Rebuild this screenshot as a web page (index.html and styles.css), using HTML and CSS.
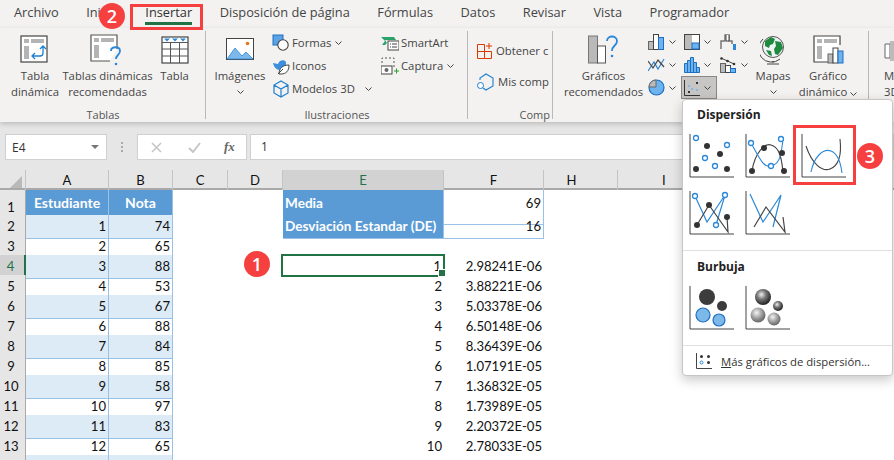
FILE: index.html
```html
<!DOCTYPE html>
<html lang="es">
<head>
<meta charset="utf-8">
<title>Insertar gráfico de dispersión</title>
<link rel="stylesheet" href="styles.css">
</head>
<body>
<div class="app">
  <nav class="tabs">
    <span class="tab">Archivo</span>
    <span class="tab">Inicio</span>
    <span class="tab tab-on">Insertar</span>
    <span class="tab">Disposición de página</span>
    <span class="tab">Fórmulas</span>
    <span class="tab">Datos</span>
    <span class="tab">Revisar</span>
    <span class="tab">Vista</span>
    <span class="tab">Programador</span>
  </nav>

  <section class="ribbon">
    <div class="group g-tablas">
      <div class="group-body">
        <div class="bigbtn b-54">
          <svg class="bigicon" width="30" height="30" viewBox="0 0 30 30"><rect x="1" y="1" width="26" height="26" fill="#fff" stroke="#444" stroke-width="1.2"/><rect x="4" y="4" width="5" height="4" fill="#b4b4b4"/><rect x="11" y="4" width="13" height="4" fill="#b4b4b4"/><rect x="4" y="11" width="5" height="13" fill="#b4b4b4"/><path d="M13 21h7a3 3 0 0 0 3-3v-6M20 14l3-3 3 3M15 18l-3 3 3 3" fill="none" stroke="#1e7fcf" stroke-width="1.3"/></svg>
          <span>Tabla<br>dinámica</span>
        </div>
        <div class="bigbtn b-91">
          <svg class="bigicon" width="36" height="32" viewBox="0 0 36 32"><path d="M27 15V1H1v26h19" fill="#fff" stroke="#555" stroke-width="1.2"/><rect x="4" y="4" width="5" height="4" fill="#b4b4b4"/><rect x="11" y="4" width="13" height="4" fill="#b4b4b4"/><rect x="4" y="11" width="5" height="13" fill="#b4b4b4"/><path d="M21 17c0-5 9-5 9 0 0 4-4 4-4 8" fill="none" stroke="#2b88d8" stroke-width="1.8"/><circle cx="26" cy="30" r="1.3" fill="#2b88d8"/></svg>
          <span>Tablas dinámicas<br>recomendadas</span>
        </div>
        <div class="bigbtn b-43">
          <svg class="bigicon" width="28" height="28" viewBox="0 0 28 28"><rect x="1" y="1" width="26" height="26" fill="#fff" stroke="#444" stroke-width="1.2"/><path d="M3 2.5h6l-3 3zM11 2.5h6l-3 3zM19 2.5h6l-3 3z" fill="#2b88d8"/><path d="M1 6.500h26M1 13h26M1 20h26M9.500 6.500V27M18.500 6.500V27" stroke="#555" stroke-width="1" fill="none"/></svg>
          <span>Tabla</span>
        </div>
      </div>
      <div class="group-label">Tablas</div>
    </div>

    <div class="group g-ilus">
      <div class="group-body">
        <div class="bigbtn b-imagenes">
          <svg class="bigicon icon-img" width="28" height="24" viewBox="0 0 28 24"><rect x=".5" y=".5" width="27" height="21" fill="#fff" stroke="#444"/><path d="M1 21l8-11 7 8 4-4 7 7z" fill="#7db8ea" stroke="#2b88d8" stroke-width=".8"/><circle cx="21.500" cy="5.500" r="1.800" fill="#e8731a"/></svg>
          <span>Imágenes</span>
          <svg class="chev chev-block" width="7" height="4" viewBox="0 0 7 4"><path d="M.5.500l3 3 3-3" fill="none" stroke="#444"/></svg>
        </div>
        <div class="smallcol col-shapes">
          <div class="smallbtn">
            <svg width="18" height="18" viewBox="0 0 18 18"><rect x="1" y="1" width="10" height="10" fill="#5ba3e6" stroke="#1e6fc0"/><circle cx="11" cy="11" r="5.200" fill="#fff" stroke="#444" stroke-width="1.100"/></svg>
            <span>Formas</span>
            <svg class="chev" width="7" height="4" viewBox="0 0 7 4"><path d="M.5.500l3 3 3-3" fill="none" stroke="#444"/></svg>
          </div>
          <div class="smallbtn">
            <svg width="18" height="18" viewBox="0 0 18 18"><path d="M1 6l5 1c1-4 6-5 8-2v4c0 3-3 4-6 4-4 0-6-3-7-7z" fill="#3d8fdc"/><path d="M7 17c0-6 4-9 10-9 0 6-3 9-8 9zM6 17l5-5" fill="#fff" stroke="#444"/></svg>
            <span>Iconos</span>
          </div>
          <div class="smallbtn">
            <svg width="18" height="18" viewBox="0 0 18 18"><path d="M9 1l7 4v8l-7 4-7-4V5zM2 5l7 4 7-4M9 9v8" fill="none" stroke="#1e7fcf" stroke-width="1.200"/></svg>
            <span>Modelos 3D</span>
            <svg class="chev chev-far" width="7" height="4" viewBox="0 0 7 4"><path d="M.5.500l3 3 3-3" fill="none" stroke="#444"/></svg>
          </div>
        </div>
        <div class="smallcol col-art">
          <div class="smallbtn">
            <svg width="18" height="18" viewBox="0 0 18 18"><path d="M0 3h13l2 3H4l2 3 -2 2H1l3-4z" fill="#2aa36b"/><rect x="7" y="7" width="11" height="9" fill="#fff" stroke="#444"/><path d="M9 10h1M11 10h5M9 13h1M11 13h5" stroke="#444"/></svg>
            <span>SmartArt</span>
          </div>
          <div class="smallbtn">
            <svg width="18" height="18" viewBox="0 0 18 18"><path d="M1 6V1h12v9" fill="none" stroke="#555" stroke-dasharray="2 2"/><rect x="0" y="9" width="11" height="8" fill="#fff" stroke="#444"/><circle cx="5.500" cy="13" r="2" fill="#666"/><path d="M13 14h5M15.500 11.500v5" stroke="#2a9d2a"/></svg>
            <span>Captura</span>
            <svg class="chev" width="7" height="4" viewBox="0 0 7 4"><path d="M.5.500l3 3 3-3" fill="none" stroke="#444"/></svg>
          </div>
        </div>
      </div>
      <div class="group-label">Ilustraciones</div>
    </div>

    <div class="group g-comp">
      <div class="group-body comp-body">
        <div class="smallbtn wide">
          <svg width="16" height="16" viewBox="0 0 16 16"><path d="M.5 1.500h7v14H.5zM.5 8.500h14v7h-7M12 0v6M9 3h6" fill="none" stroke="#d83b01"/></svg>
          <span>Obtener c</span>
        </div>
        <div class="smallbtn wide">
          <svg width="18" height="18" viewBox="0 0 18 18"><path d="M3 7V5l6-4 7 4v8l-7 4-3-2" fill="none" stroke="#1e7fcf" stroke-width="1.100"/><circle cx="3.500" cy="12.500" r="3" fill="#fff" stroke="#1e7fcf"/></svg>
          <span>Mis comp</span>
        </div>
      </div>
      <div class="group-label clip-label">Comp</div>
    </div>

    <div class="group g-charts">
      <div class="group-body">
        <div class="bigbtn b-reco">
          <svg class="bigicon" width="32" height="30" viewBox="0 0 32 30"><rect x=".5" y="1" width="9" height="27" fill="#b9b9b9" stroke="#777"/><rect x="9.500" y="11" width="8" height="17" fill="#fff" stroke="#555"/><path d="M19 6c0-6 10-6 10 0 0 5-5 4-5 10" fill="none" stroke="#2b88d8" stroke-width="1.800"/><circle cx="24" cy="21" r="1.300" fill="#2b88d8"/></svg>
          <span>Gráficos<br>recomendados</span>
        </div>
        <div class="chartgrid">
          <div class="cbtn">
            <svg width="17" height="16" viewBox="0 0 17 16"><rect x=".5" y="7.500" width="5" height="8" fill="#bbb" stroke="#666"/><rect x="5.500" y=".5" width="5" height="15" fill="#fff" stroke="#444"/><rect x="10.500" y="3.500" width="5" height="12" fill="#6db3ee" stroke="#1e6fc0"/></svg>
            <svg class="chev" width="7" height="4" viewBox="0 0 7 4"><path d="M.5.500l3 3 3-3" fill="none" stroke="#444"/></svg>
          </div>
          <div class="cbtn">
            <svg width="16" height="16" viewBox="0 0 16 16"><rect x=".5" y=".5" width="15" height="15" fill="#fff" stroke="#444"/><rect x="1" y="1" width="7" height="14" fill="#bbb"/><rect x="8" y="9" width="7" height="6" fill="#6db3ee" stroke="#1e6fc0"/></svg>
            <svg class="chev" width="7" height="4" viewBox="0 0 7 4"><path d="M.5.500l3 3 3-3" fill="none" stroke="#444"/></svg>
          </div>
          <div class="cbtn">
            <svg width="17" height="16" viewBox="0 0 17 16"><path d="M1 15V7h4V1h4v6h3v3" fill="none" stroke="#777" stroke-width="1.500"/><path d="M6 1v6h3V1" fill="#fff" stroke="#444"/><rect x="13" y="10" width="3" height="6" fill="#2b88d8"/></svg>
            <svg class="chev" width="7" height="4" viewBox="0 0 7 4"><path d="M.5.500l3 3 3-3" fill="none" stroke="#444"/></svg>
          </div>
          <div class="cbtn">
            <svg width="17" height="16" viewBox="0 0 17 16"><path d="M0 14L6 5l4 7 6-10" fill="none" stroke="#2b88d8" stroke-width="1.200"/><path d="M0 4l5 7 5-8 6 7" fill="none" stroke="#444" stroke-width="1.200"/></svg>
            <svg class="chev" width="7" height="4" viewBox="0 0 7 4"><path d="M.5.500l3 3 3-3" fill="none" stroke="#444"/></svg>
          </div>
          <div class="cbtn">
            <svg width="16" height="16" viewBox="0 0 16 16"><path d="M.5 15.500v-9h3v-3h3V.5h3v5h3v5h3v5z" fill="#6db3ee" stroke="#1e6fc0"/><path d="M3.500 6.500v9M6.500 3.500v12M9.500 5.500v10M12.500 10.500v5" stroke="#1e6fc0"/></svg>
            <svg class="chev" width="7" height="4" viewBox="0 0 7 4"><path d="M.5.500l3 3 3-3" fill="none" stroke="#444"/></svg>
          </div>
          <div class="cbtn">
            <svg width="17" height="16" viewBox="0 0 17 16"><rect x=".5" y="6.500" width="5" height="9" fill="#bbb" stroke="#666"/><rect x="5.500" y="8.500" width="5" height="7" fill="#fff" stroke="#444"/><rect x="10.500" y="11.500" width="5" height="4" fill="#6db3ee" stroke="#1e6fc0"/><path d="M1 1l13 6" stroke="#444"/><circle cx="1.500" cy="1.500" r="1.300" fill="#333"/><circle cx="7.500" cy="4" r="1.300" fill="#333"/><circle cx="14" cy="7" r="1.300" fill="#333"/></svg>
            <svg class="chev" width="7" height="4" viewBox="0 0 7 4"><path d="M.5.500l3 3 3-3" fill="none" stroke="#444"/></svg>
          </div>
          <div class="cbtn">
            <svg width="17" height="17" viewBox="0 0 17 17"><circle cx="8.500" cy="8.500" r="7.500" fill="#6db3ee" stroke="#1e6fc0" stroke-width="1.200"/><path d="M8 1v7H1a7 7 0 0 1 7-7z" fill="#bbb" stroke="#666"/></svg>
            <svg class="chev" width="7" height="4" viewBox="0 0 7 4"><path d="M.5.500l3 3 3-3" fill="none" stroke="#444"/></svg>
          </div>
          <div class="cbtn cbtn-on">
            <svg width="16" height="16" viewBox="0 0 16 16"><path d="M.5 0v15.500H16" fill="none" stroke="#333"/><rect x="12" y="2" width="2" height="2" fill="#333"/><rect x="4" y="11" width="2" height="2" fill="#333"/><rect x="4" y="5" width="2" height="2" fill="#7db8ea"/><rect x="7" y="8" width="2" height="2" fill="#7db8ea"/><rect x="12" y="9" width="2" height="2" fill="#7db8ea"/></svg>
            <svg class="chev" width="7" height="4" viewBox="0 0 7 4"><path d="M.5.500l3 3 3-3" fill="none" stroke="#444"/></svg>
          </div>
        </div>
        <div class="bigbtn b-mapas">
          <svg class="bigicon" width="26" height="30" viewBox="0 0 26 30"><circle cx="13" cy="12" r="10.500" fill="#eef3f6" stroke="#555"/><path d="M5 6l6-4 4 2-2 5-3 1-1 3-4-2zM15 6l6 1 2 6-5 7-3-1-1-5 2-3zM6 15l5 1 1 5-3-1z" fill="#1f8a3d"/><path d="M13 26v2M7 29h12M3 4a13 13 0 0 0 17 20" fill="none" stroke="#444"/></svg>
          <span>Mapas</span>
          <svg class="chev chev-block" width="7" height="4" viewBox="0 0 7 4"><path d="M.5.500l3 3 3-3" fill="none" stroke="#444"/></svg>
        </div>
        <div class="bigbtn b-din">
          <svg class="bigicon" width="31" height="30" viewBox="0 0 31 30"><path d="M27 10V1H1v26h14" fill="#fff" stroke="#444" stroke-width="1.200"/><rect x="4" y="4" width="5" height="4" fill="#b4b4b4"/><rect x="11" y="4" width="13" height="4" fill="#b4b4b4"/><rect x="4" y="11" width="5" height="13" fill="#b4b4b4"/><rect x="15" y="19" width="5" height="9" fill="#bbb" stroke="#666"/><rect x="20" y="13" width="5" height="15" fill="#fff" stroke="#444"/><rect x="25" y="16" width="5" height="12" fill="#6db3ee" stroke="#1e6fc0"/></svg>
          <span>Gráfico<br>dinámico <svg class="chev" width="7" height="4" viewBox="0 0 7 4"><path d="M.5.500l3 3 3-3" fill="none" stroke="#444"/></svg></span>
        </div>
      </div>
    </div>

    <div class="group g-3d">
      <div class="group-body">
        <div class="bigbtn b-3d">
          <svg class="bigicon" width="22" height="30" viewBox="0 0 22 30"><path d="M1 9h5v14H1z" fill="#fff" stroke="#666"/><path d="M6 6h16v20H6z" fill="#bbb"/></svg>
          <span>M<br>3D</span>
        </div>
      </div>
    </div>
  </section>

  <section class="formulabar">
    <div class="namebox"><span>E4</span><i class="namecaret"></i></div>
    <div class="dots"></div>
    <div class="fxbox">
      <svg width="11" height="11" viewBox="0 0 11 11"><path d="M1 1l9 9M10 1l-9 9" stroke="#c4c4c4" stroke-width="1.500"/></svg>
      <svg width="13" height="11" viewBox="0 0 13 11"><path d="M1 6l4 4 7-9" fill="none" stroke="#c4c4c4" stroke-width="1.800"/></svg>
      <span class="fx">fx</span>
    </div>
    <div class="formula">1</div>
  </section>

  <section class="sheet">
    <div class="row headrow">
      <div class="corner"><i></i></div><div class="ch">A</div><div class="ch">B</div><div class="ch">C</div><div class="ch">D</div><div class="ch ch-on">E</div><div class="ch">F</div><div class="ch ch-h">H</div><div class="ch ch-last">I</div>
    </div>
    <div class="row row-first">
      <div class="rh">1</div><div class="c th">Estudiante</div><div class="c th">Nota</div><div></div><div></div><div class="c lab">Media</div><div class="c n bx">69</div>
    </div>
    <div class="row">
      <div class="rh">2</div><div class="c n st">1</div><div class="c n st">74</div><div></div><div></div><div class="c lab">Desviación Estandar (DE)</div><div class="c n bx">16</div>
    </div>
    <div class="row"><div class="rh">3</div><div class="c n tb">2</div><div class="c n tb">65</div></div>
    <div class="row">
      <div class="rh rh-on">4</div><div class="c n st">3</div><div class="c n st">88</div><div></div><div></div><div class="c n active">1</div><div class="c n">2.98241E-06</div>
    </div>
    <div class="row"><div class="rh">5</div><div class="c n tb">4</div><div class="c n tb">53</div><div></div><div></div><div class="c n">2</div><div class="c n">3.88221E-06</div></div>
    <div class="row"><div class="rh">6</div><div class="c n st">5</div><div class="c n st">67</div><div></div><div></div><div class="c n">3</div><div class="c n">5.03378E-06</div></div>
    <div class="row"><div class="rh">7</div><div class="c n tb">6</div><div class="c n tb">88</div><div></div><div></div><div class="c n">4</div><div class="c n">6.50148E-06</div></div>
    <div class="row"><div class="rh">8</div><div class="c n st">7</div><div class="c n st">84</div><div></div><div></div><div class="c n">5</div><div class="c n">8.36439E-06</div></div>
    <div class="row"><div class="rh">9</div><div class="c n tb">8</div><div class="c n tb">85</div><div></div><div></div><div class="c n">6</div><div class="c n">1.07191E-05</div></div>
    <div class="row"><div class="rh">10</div><div class="c n st">9</div><div class="c n st">58</div><div></div><div></div><div class="c n">7</div><div class="c n">1.36832E-05</div></div>
    <div class="row"><div class="rh">11</div><div class="c n tb">10</div><div class="c n tb">97</div><div></div><div></div><div class="c n">8</div><div class="c n">1.73989E-05</div></div>
    <div class="row"><div class="rh">12</div><div class="c n st">11</div><div class="c n st">83</div><div></div><div></div><div class="c n">9</div><div class="c n">2.20372E-05</div></div>
    <div class="row"><div class="rh">13</div><div class="c n tb">12</div><div class="c n tb">65</div><div></div><div></div><div class="c n">10</div><div class="c n">2.78033E-05</div></div>
    <div class="row"><div class="rh"></div><div class="c st"></div><div class="c st"></div></div>
  </section>
</div>

<aside class="menu">
  <h3 class="menu-title">Dispersión</h3>
  <div class="gallery">
    <svg width="46" height="46" viewBox="0 0 46 46"><path d="M1 2v43h44" fill="none" stroke="#444"/><circle cx="7" cy="6" r="2.500" fill="#fff" stroke="#2b88d8" stroke-width="1.300"/><circle cx="18" cy="14" r="3" fill="#333"/><circle cx="38" cy="13" r="2.500" fill="#fff" stroke="#2b88d8" stroke-width="1.300"/><circle cx="31" cy="22" r="3" fill="#333"/><circle cx="16" cy="26" r="2.500" fill="#fff" stroke="#2b88d8" stroke-width="1.300"/><circle cx="26" cy="34" r="2.500" fill="#fff" stroke="#2b88d8" stroke-width="1.300"/><circle cx="7" cy="37" r="3" fill="#333"/><circle cx="38" cy="37" r="3" fill="#333"/></svg>
    <svg width="46" height="46" viewBox="0 0 46 46"><path d="M1 2v43h44" fill="none" stroke="#444"/><path d="M7 39C10 20 20 11 26 13s10 6 12 27" fill="none" stroke="#444" stroke-width="1.100"/><path d="M6 11c8 14 12 25 20 23s10-8 12-27" fill="none" stroke="#2b88d8" stroke-width="1.100"/><circle cx="6" cy="11" r="2.500" fill="#fff" stroke="#2b88d8" stroke-width="1.300"/><circle cx="26" cy="34" r="2.500" fill="#fff" stroke="#2b88d8" stroke-width="1.300"/><circle cx="36" cy="7" r="2.500" fill="#fff" stroke="#2b88d8" stroke-width="1.300"/><circle cx="7" cy="39" r="3" fill="#333"/><circle cx="19" cy="16" r="3" fill="#333"/><circle cx="37" cy="21" r="3" fill="#333"/><circle cx="39" cy="39" r="3" fill="#333"/></svg>
    <svg width="46" height="46" viewBox="0 0 46 46"><path d="M1 2v43h44" fill="none" stroke="#444"/><path d="M5 14c6 18 16 26 24 23s12-12 10-30" fill="none" stroke="#444" stroke-width="1.100"/><path d="M10 40c3-15 12-24 20-21s10 14 11 22" fill="none" stroke="#2b88d8" stroke-width="1.100"/></svg>
    <svg width="46" height="46" viewBox="0 0 46 46"><path d="M1 2v43h44" fill="none" stroke="#444"/><path d="M6 7l12 26L36 6 27 36" fill="none" stroke="#2b88d8" stroke-width="1.200"/><path d="M8 36L20 16l19 27-1-15" fill="none" stroke="#444" stroke-width="1.200"/><circle cx="6" cy="7" r="2.500" fill="#fff" stroke="#2b88d8" stroke-width="1.300"/><circle cx="27" cy="36" r="2.500" fill="#fff" stroke="#2b88d8" stroke-width="1.300"/><circle cx="36" cy="6" r="2.500" fill="#fff" stroke="#2b88d8" stroke-width="1.300"/><circle cx="8" cy="36" r="3" fill="#333"/><circle cx="20" cy="16" r="3" fill="#333"/><circle cx="38" cy="28" r="3" fill="#333"/></svg>
    <svg width="46" height="46" viewBox="0 0 46 46"><path d="M1 2v43h44" fill="none" stroke="#444"/><path d="M5 5l13 28L36 6l-8 32" fill="none" stroke="#2b88d8" stroke-width="1.200"/><path d="M9 38L21 18l19 25-2-15" fill="none" stroke="#444" stroke-width="1.200"/></svg>
  </div>
  <div class="menu-rule"></div>
  <h3 class="menu-title">Burbuja</h3>
  <div class="gallery">
    <svg width="46" height="46" viewBox="0 0 46 46"><path d="M1 2v43h44" fill="none" stroke="#444"/><circle cx="18" cy="13" r="8" fill="#3c3c3c"/><circle cx="33" cy="22" r="5" fill="#3c3c3c"/><circle cx="14" cy="31" r="7" fill="#7db8ea" stroke="#1e6fc0" stroke-width="1.200"/><circle cx="30" cy="36" r="6" fill="#7db8ea" stroke="#1e6fc0" stroke-width="1.200"/></svg>
    <svg width="46" height="46" viewBox="0 0 46 46"><defs><radialGradient id="balld" cx="40%" cy="35%" r="65%"><stop offset="0" stop-color="#eee"/><stop offset=".45" stop-color="#777"/><stop offset="1" stop-color="#222"/></radialGradient><radialGradient id="balll" cx="40%" cy="35%" r="65%"><stop offset="0" stop-color="#f4f4f4"/><stop offset=".6" stop-color="#999"/><stop offset="1" stop-color="#666"/></radialGradient></defs><path d="M1 2v43h44" fill="none" stroke="#444"/><circle cx="18" cy="13" r="8" fill="url(#balld)"/><circle cx="33" cy="22" r="5" fill="url(#balld)"/><circle cx="13" cy="31" r="7.500" fill="url(#balll)"/><circle cx="29" cy="35" r="6.500" fill="url(#balll)"/></svg>
  </div>
  <div class="menu-rule rule-low"></div>
  <div class="menu-more">
    <svg width="16" height="16" viewBox="0 0 16 16"><path d="M.5 0v15.500H16" fill="none" stroke="#444"/><rect x="4" y="2" width="3" height="3" rx="1.500" fill="#333"/><rect x="11" y="2" width="3" height="3" rx="1.500" fill="#333"/><rect x="4" y="8" width="3" height="3" rx="1.500" fill="#fff" stroke="#2b88d8"/><rect x="11" y="8" width="3" height="3" rx="1.500" fill="#333"/></svg>
    <span><u>M</u>ás gráficos de dispersión...</span>
  </div>
</aside>

<div class="mark mark-insert"></div>
<div class="mark mark-chart"></div>
<div class="badge badge-1">1</div>
<div class="badge badge-2">2</div>
<div class="badge badge-3">3</div>
</body>
</html>
```

FILE: styles.css
```css
* { box-sizing: border-box; }
html, body { margin: 0; padding: 0; height: 100%; overflow: hidden; }
body { width: 894px; height: 460px; position: relative; background: #fff; font-family: "Open Sans", "Noto Sans", sans-serif; color: #333; }
.app { display: flex; flex-direction: column; height: 460px; }

.tabs { height: 28px; flex: none; display: flex; gap: 27.5px; padding: 3px 0 0 14px; background: #f3f2f1; font-size: 12.8px; line-height: 18px; color: #444; white-space: nowrap; }
.tab-on { color: #333; position: relative; }
.tab-on::after { content: ""; position: absolute; left: 0; right: 0; top: 19px; height: 3px; background: #217346; }

.ribbon { height: 94px; flex: none; display: flex; background: #f3f2f1; box-shadow: 0 2px 5px rgba(0,0,0,.18); position: relative; z-index: 1; font-size: 11.3px; line-height: 16px; color: #444; overflow: hidden; }
.group { flex: none; display: flex; flex-direction: column; position: relative; }
.group::after { content: ""; position: absolute; right: 0; top: 3px; height: 88px; width: 1px; background: #b9b9b9; }
.g-tablas { width: 206px; }
.g-ilus { width: 262px; }
.g-comp { width: 85px; }
.g-charts { width: 316px; }
.g-3d { width: 25px; }
.g-3d::after { display: none; }
.group-body { height: 79px; flex: none; display: flex; padding-top: 6px; }
.group-label { height: 15px; flex: none; text-align: center; font-size: 11px; line-height: 16px; color: #555; }
.g-tablas .group-body { padding-left: 8px; }
.bigbtn { flex: none; display: flex; flex-direction: column; align-items: center; text-align: center; white-space: nowrap; }
.bigicon { display: block; flex: none; height: 32px; margin-bottom: 2px; }
.b-54 { width: 54px; }
.b-91 { width: 91px; }
.b-43 { width: 43px; }

.g-ilus .group-body { padding-left: 2px; }
.b-imagenes { width: 64px; }
.icon-img { height: 24px; margin: 4px 0 6px; }
.chev { display: inline-block; flex: none; }
.chev-block { display: block; margin-top: 6px; }
.smallcol { display: flex; flex-direction: column; gap: 5px; }
.col-shapes { width: 109px; }
.smallbtn { height: 18px; display: flex; align-items: center; gap: 2px; white-space: nowrap; }
.smallbtn svg { flex: none; }
.smallbtn .chev { margin-left: 2px; }
.smallbtn .chev-far { margin-left: 8px; }

.comp-body { flex-direction: column; gap: 13px; padding: 14px 0 0 9px; }
.clip-label { margin-left: -2px; text-align: right; width: 85px; padding-right: 1px; }
.wide { gap: 3px; }

.g-charts .group-body { padding-left: 10px; }
.b-reco { width: 81px; }
.chartgrid { flex: none; display: grid; grid-template-columns: repeat(3, 36px); grid-template-rows: repeat(3, 23px); width: 108px; height: 69px; margin: -4px 0 0 4px; }
.cbtn { display: flex; align-items: center; gap: 4px; }
.cbtn svg { flex: none; }
.cbtn-on { background: #c8c6c4; outline: 1px solid #8a8886; outline-offset: -1px; margin: 0 3px 0 -3px; padding-left: 3px; }
.b-mapas { width: 36px; margin-left: -1px; }
.b-din { width: 58px; margin-left: 8px; }
.b-3d { width: 26px; padding-left: 15px; align-items: flex-start; text-align: left; }

.formulabar { height: 48px; flex: none; background: #e6e6e6; display: flex; align-items: flex-start; padding: 12px 0 0 5px; font-size: 12px; color: #333; }
.namebox { width: 102px; height: 26px; background: #fff; border: 1px solid #d0d0d0; display: flex; align-items: center; justify-content: space-between; padding: 0 7px 0 6px; }
.namecaret { width: 0; height: 0; border-left: 4px solid transparent; border-right: 4px solid transparent; border-top: 4px solid #777; }
.dots { width: 30px; height: 26px; position: relative; }
.dots::after { content: ""; position: absolute; left: 14px; top: 8px; width: 2px; height: 10px; background: repeating-linear-gradient(#aaa 0 2px, transparent 2px 4px); }
.fxbox { width: 110px; height: 26px; background: #fff; border: 1px solid #d0d0d0; display: flex; align-items: center; gap: 26px; padding-left: 13px; }
.fx { font-family: "Liberation Serif", serif; font-style: italic; font-weight: 700; font-size: 13px; color: #666; margin-left: -3px; }
.formula { flex: 1; height: 26px; margin-left: 3px; background: #fff; border: 1px solid #d0d0d0; padding-left: 10px; line-height: 24px; }

.sheet { flex: 1; overflow: hidden; background: #fff; font-family: "Lato", "Open Sans", sans-serif; font-size: 13.1px; color: #111; }
.row { display: grid; grid-template-columns: 26px 83px 64px 55px 55px 161px 100px 74px 1fr; height: 20px; }
.headrow { background: #e6e6e6; border-bottom: 2px solid #a9a9a9; }
.row-first { height: 25px; }
.corner { position: relative; border-right: 1px solid #c4c4c4; }
.corner i { position: absolute; right: 3px; bottom: 2px; width: 0; height: 0; border-left: 12px solid transparent; border-bottom: 12px solid #b9b9b9; }
.ch { text-align: center; line-height: 20px; border-right: 1px solid #c4c4c4; }
.ch-h { padding-right: 18px; }
.ch-last { border-right: 0; text-align: left; padding-left: 44px; }
.ch-on { background: #d2d2d2; color: #217346; box-shadow: 0 2px 0 #217346; }
.rh { background: #e6e6e6; border-right: 1px solid #a9a9a9; border-bottom: 1px solid #c8c8c8; text-align: center; line-height: 23px; padding-right: 3px; }
.row-first .rh { line-height: 34px; }
.rh-on { background: #d2d2d2; color: #217346; border-right: 2px solid #217346; }
.c { line-height: 23px; padding: 0 2px; white-space: nowrap; }
.n { text-align: right; }
.th { background: #5b9bd5; color: #fff; font-weight: 700; text-align: center; font-size: 14px; line-height: 25px; border-right: 1px solid #9bc2e6; border-bottom: 1px solid #9bc2e6; }
.lab { background: #5b9bd5; color: #fff; font-weight: 700; border-right: 1px solid #9bc2e6; border-bottom: 1px solid #9bc2e6; font-size: 13.6px; line-height: 22px; }
.row-first .lab { line-height: 27px; }
.row-first .bx { line-height: 27px; }
.bx { border-right: 1px solid #9bc2e6; border-bottom: 1px solid #9bc2e6; }
.st { background: #ddebf7; border-right: 1px solid #9bc2e6; border-bottom: 1px solid #9bc2e6; }
.tb { border-right: 1px solid #9bc2e6; border-bottom: 1px solid #9bc2e6; }
.active { position: relative; outline: 2px solid #217346; margin: 1px 1px 0 0; height: 19px; line-height: 21px; }
.active::after { content: ""; position: absolute; right: -3px; bottom: -2px; width: 6px; height: 6px; background: #217346; border: 1px solid #fff; }

.menu { position: absolute; left: 682px; top: 99px; width: 211px; height: 277px; background: #fff; border: 1px solid #c8c6c4; border-radius: 4px; box-shadow: 0 4px 12px rgba(0,0,0,.22); z-index: 3; font-size: 11.3px; color: #333; }
.menu-title { margin: 7px 0 9px 14px; font-size: 12px; line-height: 16px; font-weight: 700; color: #222; }
.gallery { display: grid; grid-template-columns: repeat(3, 46px); gap: 11px 10px; padding-left: 6px; }
.gallery svg { display: block; }
.menu-rule { height: 1px; background: #e1dfdd; margin: 15px 0 8px; }
.rule-low { margin: 15px 0 0; }
.menu-more { display: flex; align-items: center; gap: 9px; padding: 7px 0 0 13px; }

.mark { position: absolute; border: 3px solid #f64040; z-index: 4; }
.mark-insert { left: 130px; top: 4px; width: 73px; height: 26px; }
.mark-chart { left: 793px; top: 125px; width: 63px; height: 60px; }
.badge { position: absolute; width: 26px; height: 26px; border-radius: 50%; background: #f64040; color: #fff; font-weight: 600; font-size: 18px; line-height: 26px; text-align: center; z-index: 5; }
.badge-1 { left: 244px; top: 251px; }
.badge-2 { left: 99px; top: 3px; }
.badge-3 { left: 857px; top: 143px; }
```
